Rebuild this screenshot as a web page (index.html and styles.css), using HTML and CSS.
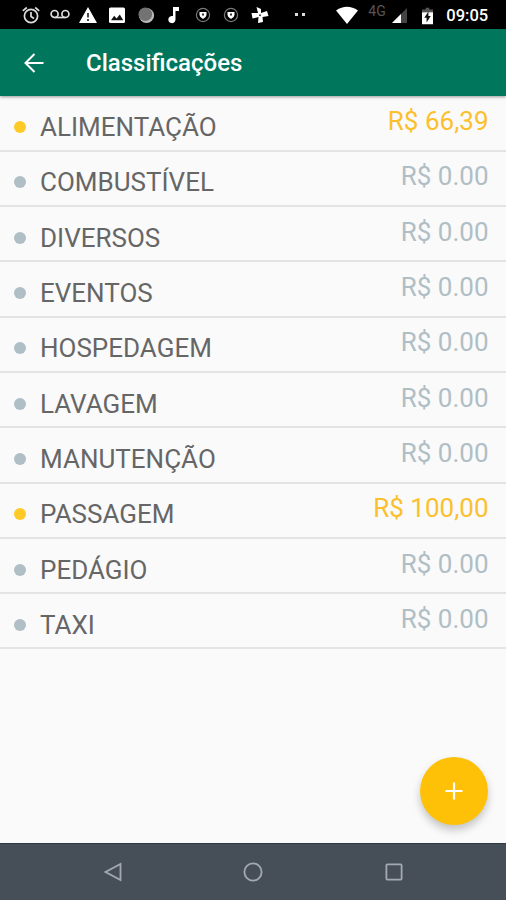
FILE: index.html
```html
<!DOCTYPE html>
<html lang="pt-BR">
<head>
    <meta charset="UTF-8">
    <title>Classificações</title>
    <link rel="stylesheet" href="styles.css">
</head>
<body>
    <div class="status-bar">
        <div class="notifications">
            <svg viewBox="0 0 20 20"><g fill="none" stroke="#ddd" stroke-width="1.7"><circle cx="10" cy="11" r="6.6"/><path d="M10 7v4.5l3 2M1.8 5.8l4-3.3M18.2 5.8l-4-3.3"/></g></svg>
            <svg viewBox="0 0 20 20"><g fill="none" stroke="#ddd" stroke-width="1.7"><circle cx="4.6" cy="9" r="3.5"/><circle cx="15.4" cy="9" r="3.5"/><path d="M4.6 12.5h10.8"/></g></svg>
            <svg viewBox="0 0 20 20"><path fill="#fff" d="M10 2L19 18H1z"/><path stroke="#333" stroke-width="1.8" d="M10 8v4.5M10 14v2"/></svg>
            <svg viewBox="0 0 20 20"><rect x="2" y="2.5" width="16" height="15.5" rx="1.5" fill="#fff"/><path fill="#111" d="M4 15.2l3.2-4.4 2.4 2.6 3.2-3.8 3.4 5.6z"/></svg>
            <svg viewBox="0 0 20 20"><circle cx="10.5" cy="10.5" r="7.6" fill="#bbb"/><circle cx="9.3" cy="9.3" r="6.8" fill="#737373"/></svg>
            <svg viewBox="0 0 20 20"><path fill="#fff" d="M9 2h6v4h-3.5v8.5a3.6 3.6 0 1 1-2.5-3.4z"/></svg>
            <svg viewBox="0 0 20 20"><circle cx="10" cy="10" r="6.6" fill="none" stroke="#777" stroke-width="1.2"/><path fill="#fff" d="M6.5 7h7v3q0 2-3.5 4-3.5-2-3.5-4z"/><path fill="#333" d="M9 8.5h2v2H9z"/></svg>
            <svg viewBox="0 0 20 20"><circle cx="10" cy="10" r="6.6" fill="none" stroke="#777" stroke-width="1.2"/><path fill="#fff" d="M6.5 7h7v3q0 2-3.5 4-3.5-2-3.5-4z"/><path fill="#333" d="M9 8.5h2v2H9z"/></svg>
            <svg viewBox="0 0 20 20"><path fill="#fff" d="M6.500 2L11 4v4l6-2 1.500 5-6 1 .5 5-5 1 .5-6-6 1.500L1.500 8 8 8z"/><circle cx="10" cy="10.300" r="1" fill="#333"/></svg>
        </div>
        <span class="more"><i></i><i></i></span>
        <svg class="wifi" viewBox="0 0 22 18"><path fill="#fff" d="M0 4.5Q11-3 22 4.5L11 18z"/></svg>
        <span class="network">4G</span>
        <svg class="signal" viewBox="0 0 15 15"><path fill="#444" d="M15 0v15H0z"/><path fill="#fff" d="M9 6v9H0z"/></svg>
        <svg class="battery" viewBox="0 0 12 18"><path fill="#555" d="M4 0h4v2h4v4H0V2h4z"/><path fill="#fff" d="M0 5h12v13H0z"/><path fill="#111" d="M7 4L2.5 11H5v5l4.5-7H7z"/></svg>
        <span class="time">09:05</span>
    </div>

    <header class="toolbar">
        <svg class="back" viewBox="0 0 20 20"><path fill="none" stroke="#fff" stroke-width="2" d="M19.5 10H2M10.5 1L1.5 10l9 9"/></svg>
        <h1 class="title">Classificações</h1>
    </header>

    <main class="content">
        <ul class="list">
            <li class="item active"><span class="dot"></span><span class="name">ALIMENTAÇÃO</span><span class="value">R$ 66,39</span></li>
            <li class="item"><span class="dot"></span><span class="name">COMBUSTÍVEL</span><span class="value">R$ 0.00</span></li>
            <li class="item"><span class="dot"></span><span class="name">DIVERSOS</span><span class="value">R$ 0.00</span></li>
            <li class="item"><span class="dot"></span><span class="name">EVENTOS</span><span class="value">R$ 0.00</span></li>
            <li class="item"><span class="dot"></span><span class="name">HOSPEDAGEM</span><span class="value">R$ 0.00</span></li>
            <li class="item"><span class="dot"></span><span class="name">LAVAGEM</span><span class="value">R$ 0.00</span></li>
            <li class="item"><span class="dot"></span><span class="name">MANUTENÇÃO</span><span class="value">R$ 0.00</span></li>
            <li class="item active"><span class="dot"></span><span class="name">PASSAGEM</span><span class="value">R$ 100,00</span></li>
            <li class="item"><span class="dot"></span><span class="name">PEDÁGIO</span><span class="value">R$ 0.00</span></li>
            <li class="item"><span class="dot"></span><span class="name">TAXI</span><span class="value">R$ 0.00</span></li>
        </ul>
        <button class="fab" type="button" aria-label="Adicionar">
            <svg viewBox="0 0 18 18"><path stroke="#fff" stroke-width="2.2" d="M9 0.5v17M0.5 9h17"/></svg>
        </button>
    </main>

    <nav class="nav-bar">
        <svg viewBox="0 0 20 20"><path d="M17.5 2v16L2.5 10z"/></svg>
        <svg viewBox="0 0 20 20"><circle cx="10" cy="10" r="8.6"/></svg>
        <svg viewBox="0 0 20 20"><rect x="2.4" y="2.4" width="15.2" height="15.2" rx="1"/></svg>
    </nav>
</body>
</html>
```

FILE: styles.css
```css
html, body {
    margin: 0;
    height: 100%;
}

body {
    display: flex;
    flex-direction: column;
    font-family: Roboto, sans-serif;
    background: #fafafa;
    overflow: hidden;
}

svg {
    display: block;
    flex: none;
}

.status-bar {
    display: flex;
    align-items: center;
    flex: none;
    height: 29px;
    padding-left: 17px;
    background: #000;
    color: #fff;
}

.notifications {
    display: grid;
    grid-template-columns: repeat(9, 28.6px);
    justify-items: center;
}

.notifications svg {
    width: 20px;
    height: 20px;
}

.more {
    display: flex;
    gap: 4px;
    margin-left: 21px;
}

.more i {
    width: 3px;
    height: 3px;
    background: #ddd;
}

.wifi {
    width: 22px;
    height: 18px;
    margin-left: 31px;
}

.network {
    width: 19px;
    margin: -7px 0 0 10px;
    font-size: 14px;
    line-height: 15px;
    color: #555;
}

.signal {
    width: 15px;
    height: 15px;
    margin: 2px 0 0 5px;
}

.battery {
    width: 11px;
    height: 18px;
    margin: 2px 0 0 15px;
}

.time {
    margin: 2px 0 0 13px;
    font-size: 16.5px;
    font-weight: 500;
    line-height: 20px;
}

.toolbar {
    display: flex;
    align-items: center;
    flex: none;
    height: 67px;
    padding-left: 24px;
    background: #00775d;
    box-shadow: 0 1px 3px rgba(0, 0, 0, .4);
    z-index: 1;
}

.back {
    width: 20px;
    height: 20px;
}

.title {
    margin: 1px 0 0 42px;
    font-size: 24px;
    font-weight: 500;
    color: #fff;
}

.content {
    position: relative;
    flex: 1;
}

.list {
    margin: 0;
    padding: 0.5px 0 0;
    list-style: none;
}

.item {
    display: flex;
    align-items: center;
    box-sizing: border-box;
    height: 55.3px;
    padding: 0 17.5px 0 14px;
    border-bottom: 2px solid #e4e4e4;
    font-size: 26px;
    line-height: 30px;
    color: #b0bec5;
}

.dot {
    width: 12px;
    height: 12px;
    margin-top: 8px;
    border-radius: 50%;
    background: #b0bec5;
}

.name {
    flex: 1;
    margin: 8px 0 0 14px;
    color: #666;
}

.value {
    margin-top: -4px;
}

.active {
    color: #fbc02d;
}

.active .dot {
    background: #ffca28;
}

.fab {
    position: absolute;
    right: 18px;
    bottom: 18px;
    display: flex;
    align-items: center;
    justify-content: center;
    width: 68px;
    height: 68px;
    padding: 0;
    border: 0;
    border-radius: 50%;
    background: #ffc107;
    box-shadow: 0 5px 9px rgba(0, 0, 0, .22);
}

.fab svg {
    width: 18px;
    height: 18px;
}

.nav-bar {
    display: flex;
    justify-content: center;
    align-items: center;
    gap: 120.5px;
    flex: none;
    box-sizing: border-box;
    height: 57px;
    border-top: 1px solid #303840;
    background: #464f58;
}

.nav-bar svg {
    width: 20px;
    height: 20px;
    fill: none;
    stroke: #a3a9b0;
    stroke-width: 1.8;
}
```
